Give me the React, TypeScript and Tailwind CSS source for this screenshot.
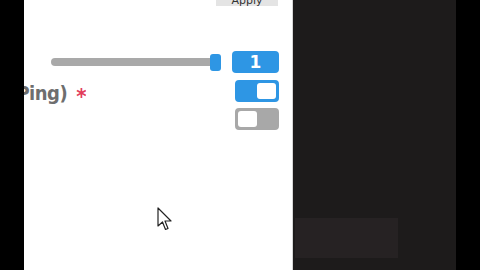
import React from "react";

function Toggle({ on }: { on: boolean }) {
  return (
    <div
      className={
        "flex h-[22px] w-[44px] rounded-[4px] border-2 p-[1px] " +
        (on ? "justify-end border-[#2e96e4] bg-[#2e96e4]" : "justify-start border-[#a8a8a8] bg-[#a8a8a8]")
      }
    >
      <div className="h-full w-[19px] rounded-[3px] bg-white" />
    </div>
  );
}

function Cursor() {
  return (
    <svg className="absolute left-[157px] top-[207px]" width="16" height="25" viewBox="0 0 16 25">
      <path
        d="M1 1 L1 19 L5.5 15 L8.5 22.5 L11 21.5 L8 14 L14 14 Z"
        fill="#fff"
        stroke="#222"
        strokeWidth="1.2"
        strokeLinejoin="round"
      />
    </svg>
  );
}

export default function App() {
  return (
    <div className="relative flex h-[270px] w-[480px] overflow-hidden bg-black" style={{ fontFamily: '"DejaVu Sans", sans-serif' }}>
      <div className="w-[24px] shrink-0 bg-black" />

      <div className="flex w-[269px] shrink-0 flex-col overflow-hidden border-r border-[#d6d6d6] bg-white pr-[13px]">
        <div className="flex h-[6px] justify-end overflow-hidden pr-[1px]">
          <div className="-mt-[12px] flex h-[18px] w-[62px] items-end justify-center bg-[#e4e4e4] text-[11px] leading-none text-[#333]">
            Apply
          </div>
        </div>

        <div className="mt-[45px] flex h-[22px] items-center">
          <div className="ml-[27px] flex w-[170px] items-center">
            <div className="h-[8px] flex-1 rounded-full bg-[#a9a9a9]" />
            <div className="-ml-[6px] h-[17px] w-[11px] rounded-[3px] bg-[#2e96e4]" />
          </div>
          <div className="ml-auto flex h-[22px] w-[47px] items-center justify-center rounded-[4px] bg-[#2e96e4] text-[17px] font-bold leading-none text-white">
            1
          </div>
        </div>

        <div className="mt-[7px] flex h-[22px] items-center">
          <div className="mt-[4px] flex h-[30px] w-[62px] shrink-0 items-center justify-end overflow-hidden whitespace-nowrap">
            <span
              className="text-[20px] font-bold leading-[30px] tracking-[-0.5px] text-[#6e6e6e]"
              style={{ fontFamily: '"DejaVu Sans Condensed", "DejaVu Sans", sans-serif' }}
            >
              ICMP (Ping)<span className="relative top-[4px] ml-[9px] text-[22px] text-[#e23d5c]">*</span>
            </span>
          </div>
          <div className="ml-auto">
            <Toggle on />
          </div>
        </div>

        <div className="mt-[6px] flex h-[22px] items-center justify-end">
          <Toggle on={false} />
        </div>
      </div>

      <div className="flex w-[163px] shrink-0 flex-col justify-end bg-[#1d1b1b] pb-[12px] pl-[2px]">
        <div className="h-[40px] w-[103px] bg-[#262223]" />
      </div>

      <div className="flex-1 bg-black" />

      <Cursor />
    </div>
  );
}
